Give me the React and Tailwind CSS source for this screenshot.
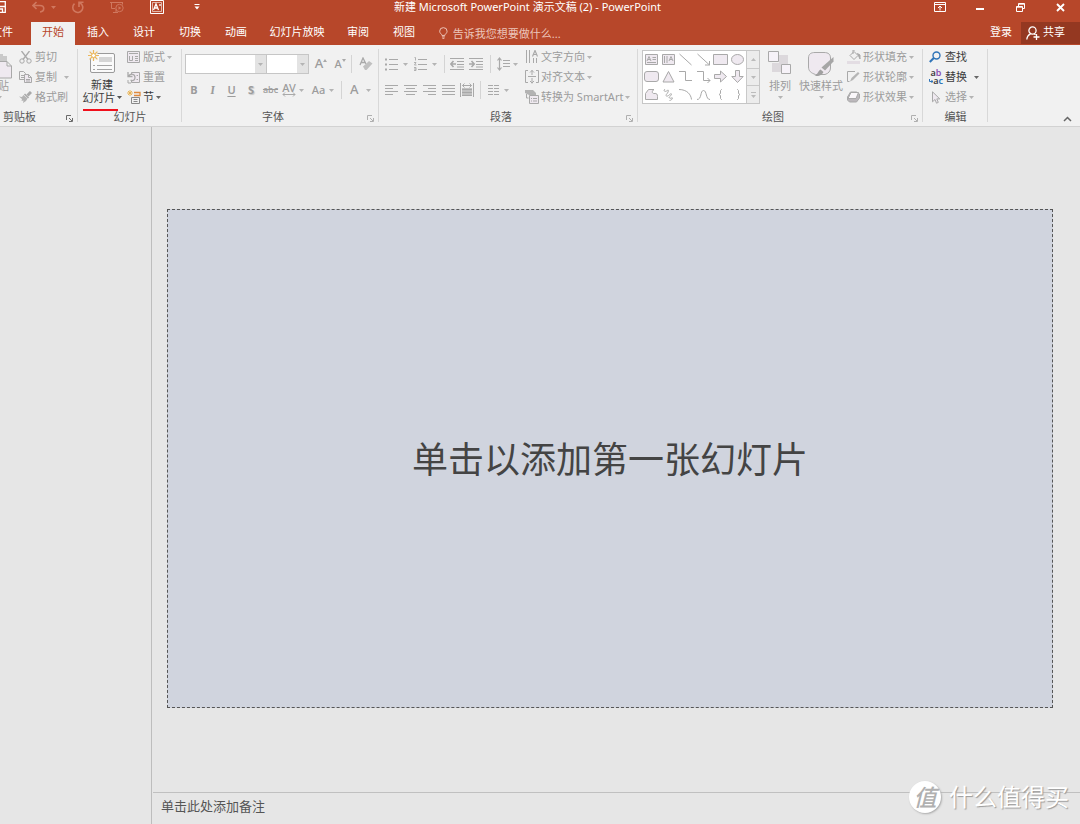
import React from "react";

const G = "#a9a9a9";
const F = "#efe9f0";

function Svg({ w, h, children, className = "" }) {
  return (
    <svg width={w} height={h} viewBox={`0 0 ${w} ${h}`} fill="none" stroke={G} strokeWidth="1" aria-hidden="true" className={`shrink-0 ${className}`}>
      {children}
    </svg>
  );
}

function Caret({ color = "#b4b4b4" }) {
  return (
    <svg width="5" height="3" viewBox="0 0 5 3" aria-hidden="true" className="shrink-0">
      <path d="M0 0h5L2.5 3z" fill={color} />
    </svg>
  );
}

function Rows({ rows, w = 13, h = 12 }) {
  return (
    <Svg w={w} h={h}>
      {rows.map(([a, b, y]) => (
        <path key={`${a}-${y}`} d={`M${a} ${y}.5H${b}`} />
      ))}
    </Svg>
  );
}

function Group({ label, className, launcher, children }) {
  return (
    <section aria-label={label} className={`relative flex shrink-0 flex-col ${className}`}>
      <div className="flex h-[60px]">{children}</div>
      <div className="flex h-[19px] items-center">
        <span className="flex-1 pt-[2px] text-center text-[#555]">{label}</span>
        {launcher && (
          <button aria-label={`${label}设置`} className="flex w-[15px] justify-center pt-1 pr-[2px]">
            <svg width="7" height="7" viewBox="0 0 7 7" fill="none" stroke="#b0b0b0" aria-hidden="true">
              <path d="M.5 5V.5H5M3 3l3 3M6.5 3v3.500H3" />
            </svg>
          </button>
        )}
      </div>
      <div className="absolute top-[2px] right-0 bottom-1 w-px bg-[#d8d8d8]" />
    </section>
  );
}

function Item({ icon, children, caret, on }) {
  return (
    <button className={`flex h-5 items-center gap-[2px] whitespace-nowrap ${on ? "text-[#3b3b3b]" : "text-[#9c9c9c]"}`}>
      <span className="flex w-[14px] shrink-0">{icon}</span>
      <span>{children}</span>
      {caret && <Caret color={on ? "#666" : "#b4b4b4"} />}
    </button>
  );
}

function Tool({ label, className, spread, children }) {
  return (
    <button aria-label={label} className={`flex h-5 shrink-0 items-center text-[#9c9c9c] ${spread ? "justify-between" : "justify-center"} ${className}`}>
      {children}
    </button>
  );
}

function Sep() {
  return <span className="h-[18px] w-px shrink-0 bg-[#d4d4d4]" />;
}

function TitleBar() {
  return (
    <div className="flex h-[22px] items-start text-white">
      <button aria-label="保存" className="flex h-[14px] w-[7px] items-center">
        <svg width="6" height="12" viewBox="0 0 6 12" fill="none" stroke="#fff" strokeWidth="1.300" aria-hidden="true">
          <path d="M0 .7h5.300v10.600H0M0 5.500h5M0 8h2.500v3" />
        </svg>
      </button>
      <button aria-label="撤消" className="ml-6 flex h-[14px] w-[15px] items-center justify-center">
        <svg width="13" height="12" viewBox="0 0 13 12" fill="none" stroke="#d0785f" strokeWidth="1.600" aria-hidden="true">
          <path d="M4.500 1L1 4.500 4.500 8M1.500 4.500H8c5 0 5 6 0 6.500" />
        </svg>
      </button>
      <button aria-label="撤消选项" className="ml-1 flex h-[14px] w-[7px] items-center justify-center">
        <Caret color="#d0785f" />
      </button>
      <button aria-label="恢复" className="ml-3 flex h-[14px] w-4 items-center justify-center">
        <svg width="13" height="13" viewBox="0 0 13 13" fill="none" stroke="#d0785f" strokeWidth="1.600" aria-hidden="true">
          <path d="M3.500 2.700A5 5 0 1 0 9 2M8 6V1.300h4.500" />
        </svg>
      </button>
      <button aria-label="从头开始放映" className="ml-6 flex h-[14px] w-4 items-center justify-center">
        <svg width="14" height="13" viewBox="0 0 14 13" fill="none" stroke="#d0785f" aria-hidden="true">
          <path d="M0 1.500h13M1.500 1.500v6H5M6 8v3.500M3 11.500h5M12.500 1.500v2" />
          <circle cx="9.500" cy="7" r="3.700" />
          <path d="M8.500 5.200v3.600L11.300 7z" fill="#d0785f" stroke="none" />
        </svg>
      </button>
      <button aria-label="文本框" className="ml-6 flex h-[14px] w-4 items-center justify-center">
        <svg width="14" height="14" viewBox="0 0 14 14" fill="none" stroke="#fff" aria-hidden="true">
          <path d="M.5.5h13v13H.5z" />
          <path d="M2.500 2.500h9v9h-9z" strokeOpacity=".6" />
          <path d="M3.500 10L6 4l2.500 6M4.500 8h3M10 4v2" strokeWidth="1.300" />
        </svg>
      </button>
      <button aria-label="自定义快速访问工具栏" className="ml-6 flex h-[14px] w-4 items-center justify-center">
        <svg width="6" height="6" viewBox="0 0 6 6" fill="#fff" aria-hidden="true">
          <path d="M.5 0h5v1h-5zM.5 2.500h5L3 5.500z" />
        </svg>
      </button>
      <h1 className="min-w-0 flex-1 truncate pr-[70px] text-center leading-[14px]">
        新建 Microsoft PowerPoint 演示文稿 (2) - PowerPoint
      </h1>
      <button aria-label="功能区显示选项" className="flex h-[14px] w-10 items-center justify-center">
        <svg width="12" height="10" viewBox="0 0 12 10" fill="none" stroke="#fff" aria-hidden="true">
          <path d="M.5.5h11v9H.5zM.5 2.500h11M6 8.500V4M4 6l2-2 2 2" />
        </svg>
      </button>
      <button aria-label="最小化" className="flex h-[14px] w-10 items-center justify-center pt-[3px]">
        <svg width="8" height="2" viewBox="0 0 8 2" aria-hidden="true">
          <path d="M0 0h8v2H0z" fill="#fff" />
        </svg>
      </button>
      <button aria-label="还原" className="flex h-[14px] w-10 items-center justify-center">
        <svg width="9" height="9" viewBox="0 0 9 9" fill="none" stroke="#fff" aria-hidden="true">
          <path d="M.5 3.500h6v5h-6zM.5 4.200h6M2.500 3V.5h6v5H7M2.500 1.200h6" />
        </svg>
      </button>
      <button aria-label="关闭" className="flex h-[14px] w-10 items-center justify-center">
        <svg width="9" height="9" viewBox="0 0 9 9" fill="none" stroke="#fff" strokeWidth="1.900" aria-hidden="true">
          <path d="M1 1l7 7M8 1L1 8" />
        </svg>
      </button>
    </div>
  );
}

function TabBar() {
  const tab = "h-[21px] shrink-0 whitespace-nowrap text-center";
  return (
    <nav className="flex h-[23px] items-start text-white">
      <button className="flex h-[21px] w-[31px] shrink-0 items-center justify-end overflow-hidden pr-[18px] whitespace-nowrap">文件</button>
      <button className="h-[23px] w-[44px] shrink-0 bg-[#f1f1f1] pb-[2px] text-center text-[#b7472a]">开始</button>
      <button className={`${tab} w-[46px]`}>插入</button>
      <button className={`${tab} w-[46px]`}>设计</button>
      <button className={`${tab} w-[46px]`}>切换</button>
      <button className={`${tab} w-[46px]`}>动画</button>
      <button className={`${tab} w-[76px]`}>幻灯片放映</button>
      <button className={`${tab} w-[46px]`}>审阅</button>
      <button className={`${tab} w-[46px]`}>视图</button>
      <label className="flex h-[22px] flex-1 items-center gap-[5px] pl-3">
        <svg width="9" height="12" viewBox="0 0 9 12" fill="none" stroke="#ecc5ba" aria-hidden="true">
          <path d="M3 8.500C3 7 .7 6.500.7 4.200a3.800 3.700 0 0 1 7.600 0C8.300 6.500 6 7 6 8.500zM3 10h3M3.500 11.500h2" />
        </svg>
        <input aria-label="告诉我您想要做什么" placeholder="告诉我您想要做什么..." className="h-[22px] w-full min-w-0 bg-transparent outline-none placeholder:text-[#ecc5ba]" />
      </label>
      <button className="h-[21px] w-10 shrink-0">登录</button>
      <button className="flex h-[22px] w-[59px] shrink-0 items-center gap-[3px] bg-[#943821] pb-px pl-[5px]">
        <svg width="14" height="14" viewBox="0 0 14 14" fill="none" stroke="#fff" strokeWidth="1.300" aria-hidden="true">
          <circle cx="6.500" cy="4.500" r="3.600" />
          <path d="M.8 13.500C1 10.500 2.500 8.800 4.500 7.800M8 7.700l1.500 1M10.500 8v6M7.500 11h6" />
        </svg>
        共享
      </button>
    </nav>
  );
}

function ClipboardGroup() {
  return (
    <section aria-label="剪贴板" className="relative flex w-[78px] shrink-0 flex-col">
      <div className="flex h-[60px]">
        <button className="flex w-[19px] shrink-0 flex-col items-start overflow-hidden pt-[5px] text-[#9c9c9c]">
          <Svg w={13} h={28}>
            <path d="M0 2h3v2h4v6H0z" fill="#c9c9c9" stroke="none" />
            <path d="M0 9.500h7l4.500 4.500v12H0M7 9.500V14h4.500" fill={F} />
          </Svg>
          <span className="flex w-[9px] justify-end leading-[12px] whitespace-nowrap">粘贴</span>
          <span className="mt-1 -ml-[3px] flex"><Caret /></span>
        </button>
        <div className="flex flex-col">
          <Item icon={<Svg w={13} h={13}><circle cx="3" cy="10" r="2.200" /><circle cx="10" cy="10" r="2.200" /><path d="M2.500 0l6.500 8.500M10.500 0L4 8.500" strokeWidth="1.300" /></Svg>}>剪切</Item>
          <div className="flex">
            <Item icon={<Svg w={13} h={12}><path d="M.5.5h4l2 2v6h-6zM2 4.500h3M2 6.500h3" /><path d="M5.500 3.500h4l3 3v5h-7zM9.500 3.500v3h3M7 8.500h4M7 10h4" fill={F} /></Svg>}>复制</Item>
            <button aria-label="复制选项" className="ml-[7px] flex items-center"><Caret /></button>
          </div>
          <Item icon={<Svg w={13} h={12}><path d="M0 5.500l3 .5 1.500-2 4 3.500L7 10l-3 2 .5-2.500L2.500 10 3 8z" fill="#b3b3b3" stroke="none" /><path d="M5.500 3l4 4" strokeWidth="1.600" /><path d="M8.500 4.500L12 1" strokeWidth="3" /></Svg>}>格式刷</Item>
        </div>
      </div>
      <div className="flex h-[19px] items-center justify-between">
        <span className="pt-[2px] pl-[3px] text-[#555]">剪贴板</span>
        <button aria-label="剪贴板设置" className="flex w-[15px] justify-center pt-1 pr-[2px]">
          <svg width="7" height="7" viewBox="0 0 7 7" fill="none" stroke="#6b6b6b" aria-hidden="true">
            <path d="M.5 5V.5H5M3 3l3 3M6.500 3v3.500H3" />
          </svg>
        </button>
      </div>
      <div className="absolute top-[2px] right-0 bottom-1 w-px bg-[#d8d8d8]" />
    </section>
  );
}

function SlidesGroup() {
  return (
    <Group label="幻灯片" className="w-[104px]">
      <button className="relative flex w-[48px] shrink-0 flex-col items-center pt-[3px] text-[#3b3b3b]">
        <svg width="28" height="24" viewBox="0 0 28 24" fill="none" aria-hidden="true">
          <rect x="2.500" y="3.500" width="24" height="19" rx="1.500" fill="#fafafa" stroke="#9a9a9a" />
          <path d="M11 7h13v5H11z" fill="#d5d5d5" />
          <path d="M5 15.500h2M9 15.500h15M5 19.500h2M9 19.500h15" stroke="#a5a5a5" />
          <circle cx="5.500" cy="5.500" r="3" fill="#f1f1f1" stroke="#f1f1f1" strokeWidth="3" />
          <path d="M5.500 0v11M0 5.500h11M1.600 1.600l7.800 7.800M9.400 1.600L1.600 9.400" stroke="#ebb75c" strokeWidth="1.200" />
          <circle cx="5.500" cy="5.500" r="2" fill="#fff" stroke="#ebb75c" />
        </svg>
        <span className="mt-1 leading-[13px]">新建</span>
        <span className="flex items-center gap-[1px] leading-[13px] whitespace-nowrap">幻灯片 <Caret color="#555" /></span>
        <span className="absolute top-[62px] left-[5px] h-[2px] w-[35px] bg-[#f0101c]" />
      </button>
      <div className="flex flex-col pl-[1px]">
        <Item caret icon={<Svg w={13} h={12}><path d="M.5.5h12v11H.5z" fill={F} /><path d="M2 2.500h9M2.500 5v4.500h3V5M8 5.500h3M8 7.500h3M8 9.500h3" /></Svg>}>版式</Item>
        <Item icon={<Svg w={13} h={13}><path d="M4.500 3.500V1.500h8v10h-8v-2" fill={F} /><path d="M1 1v4.500h4.500M1.500 5C4 2 8 3 8 6.500S5 10 3.500 9" strokeWidth="1.300" /><path d="M9.500 4.500H11M9.500 8.500H11M1 9v3h3" /></Svg>}>重置</Item>
        <Item on caret icon={<svg width="14" height="14" viewBox="0 0 14 14" fill="none" className="shrink-0" aria-hidden="true"><path d="M3 0v6M0 3h6M1 1l4 4M5 1L1 5" stroke="#e9b04a" strokeWidth=".9" /><path d="M7 2.500h6v3H7" stroke="#e08a3c" strokeWidth="1.300" /><path d="M4.500 7.500h8v6h-8zM6.500 9.500h4M6.500 11.500h4" stroke="#888" /></svg>}>节</Item>
      </div>
    </Group>
  );
}

function Combo({ label, className }) {
  return (
    <div className={`flex h-5 shrink-0 border border-[#c6c6c6] bg-white ${className}`}>
      <input aria-label={label} className="min-w-0 flex-1 bg-transparent px-1 outline-none" />
      <button aria-label={`${label}列表`} className="flex w-[11px] shrink-0 items-center justify-center bg-[#e3e3e3]"><Caret /></button>
    </div>
  );
}

function FontGroup() {
  return (
    <Group label="字体" launcher className="w-[197px]">
      <div className="flex flex-col gap-[6px] pt-[7px] pl-[3px]">
        <div className="flex items-center">
          <Combo label="字体名称" className="w-[82px]" />
          <Combo label="字号" className="-ml-px w-[43px]" />
          <Tool label="增大字号" className="ml-[2px] w-5"><span className="text-[13px] font-medium">A</span><span className="-mt-[8px]"><Svg w={4} h={3}><path d="M0 3h4L2 0z" fill={G} stroke="none" /></Svg></span></Tool>
          <Tool label="减小字号" className="w-[18px]"><span className="text-[11px] font-medium">A</span><span className="-mt-[8px]"><Svg w={4} h={3}><path d="M0 0h4L2 3z" fill={G} stroke="none" /></Svg></span></Tool>
          <span className="ml-[2px] flex"><Sep /></span>
          <Tool label="清除格式" className="ml-[6px] w-4">
            <Svg w={14} h={14}><path d="M1 8L4 1l3 6M2 5.500h4" strokeWidth="1.300" /><path d="M4 9.500l6-5.500 3.500 2.500-6 6.500H6z" fill="#c0c0c0" stroke="none" /></Svg>
          </Tool>
        </div>
        <div className="flex items-center">
          <Tool label="加粗" className="w-[18px] font-bold">B</Tool>
          <Tool label="倾斜" className="w-[19px] font-serif text-[12px] font-bold italic">I</Tool>
          <Tool label="下划线" className="w-[19px] font-semibold underline underline-offset-2">U</Tool>
          <Tool label="文字阴影" className="w-5 font-bold"><span className="text-shadow-[1px_1px_1px_#c5c5c5]">S</span></Tool>
          <Tool label="删除线" className="w-[19px] text-[9px] font-medium line-through">abc</Tool>
          <Tool label="字符间距" className="w-[26px] gap-[3px]">
            <span className="flex flex-col items-center">
              <span className="text-[11px] leading-[9px] font-medium">AV</span>
              <Svg w={14} h={5}><path d="M1 2.500h12M3 .5l-2 2 2 2M11 .5l2 2-2 2" /></Svg>
            </span>
            <Caret />
          </Tool>
          <Tool label="更改大小写" className="ml-1 w-[26px] gap-1"><span className="font-medium">Aa</span><Caret /></Tool>
          <span className="ml-[5px] flex"><Sep /></span>
          <Tool spread label="字体颜色" className="ml-2 w-[21px]"><span className="text-[13px] font-medium">A</span><Caret /></Tool>
        </div>
      </div>
    </Group>
  );
}

function ParagraphGroup() {
  return (
    <Group label="段落" launcher className="w-[259px]">
      <div className="flex w-[146px] shrink-0 flex-col gap-[6px] pt-[7px] pl-[6px]">
        <div className="flex items-center">
          <Tool spread label="项目符号" className="w-[23px]">
            <Svg w={13} h={13}><path d="M0 1.500h2M0 6.500h2M0 11.500h2" strokeWidth="2" /><path d="M4 1.500h9M4 6.500h9M4 11.500h9" /></Svg><Caret />
          </Tool>
          <Tool spread label="编号" className="ml-[6px] w-[23px]">
            <Svg w={13} h={14}><path d="M.5.500h1v3M0 5.500h2L.5 8h2M0 10.500h2v3H0M0 12h2" strokeWidth=".9" /><path d="M4 2.500h9M4 7.500h9M4 12.500h9" /></Svg><Caret />
          </Tool>
          <span className="ml-[7px] flex"><Sep /></span>
          <Tool label="减少缩进" className="ml-[5px] w-[15px]">
            <Svg w={15} h={12}><path d="M0 .5h14M7 3.500h7M7 6.500h7M0 11.500h14M7 9h7" /><path d="M1 6h5M3.500 3L.8 6l2.700 3" strokeWidth="1.600" /></Svg>
          </Tool>
          <Tool label="增加缩进" className="ml-1 w-[15px]">
            <Svg w={15} h={12}><path d="M0 .5h14M7 3.500h7M7 6.500h7M0 11.500h14M7 9h7" /><path d="M0 6h5M2.500 3l2.700 3-2.700 3" strokeWidth="1.600" /></Svg>
          </Tool>
          <span className="ml-[6px] flex"><Sep /></span>
          <Tool spread label="行距" className="ml-[6px] w-[21px]">
            <Svg w={13} h={14}><path d="M2.500 1v12M.5 3.500l2-2.500 2 2.500M.5 10.500l2 2.500 2-2.500" strokeWidth="1.200" /><path d="M6 3.500h7M6 6.500h7M6 9.500h7" /></Svg><Caret />
          </Tool>
        </div>
        <div className="flex items-center">
          <Tool label="左对齐" className="w-[13px]"><Rows rows={[[0, 13, 0], [0, 8, 3], [0, 13, 6], [0, 8, 9]]} h={10} /></Tool>
          <Tool label="居中" className="ml-[6px] w-[13px]"><Rows rows={[[0, 13, 0], [2, 11, 3], [0, 13, 6], [2, 11, 9]]} h={10} /></Tool>
          <Tool label="右对齐" className="ml-[6px] w-[13px]"><Rows rows={[[0, 13, 0], [5, 13, 3], [0, 13, 6], [5, 13, 9]]} h={10} /></Tool>
          <Tool label="两端对齐" className="ml-[6px] w-[13px]"><Rows rows={[[0, 13, 0], [0, 13, 3], [0, 13, 6], [0, 13, 9]]} h={10} /></Tool>
          <Tool label="分散对齐" className="ml-[5px] w-[14px]">
            <Svg w={14} h={14}><path d="M.5 0v14M13.500 0v14M2.500 2.500h9M4.500.5l-2 2 2 2M9.500.5l2 2-2 2" /><path d="M2 5h10v8H2z" fill="#c2c2c2" stroke="none" /><path d="M2 6.500h10M2 9.500h10M2 12.500h10" /></Svg>
          </Tool>
          <span className="ml-[6px] flex"><Sep /></span>
          <Tool spread label="分栏" className="ml-[7px] w-[21px]">
            <Svg w={11} h={10}><path d="M0 .5h5M6 .5h5M0 3.500h5M6 3.500h5M0 6.500h5M6 6.500h5M0 9.500h5M6 9.500h5" /></Svg><Caret />
          </Tool>
        </div>
      </div>
      <div className="flex flex-col">
        <Item caret icon={<Svg w={13} h={14}><path d="M1.500 0v13M4.500 0v13M8.500 8v5M11.500 8v5" /><path d="M7.500 6.500L10 .5l2.500 6M8.300 4.500h3.400" strokeWidth="1.200" /></Svg>}>文字方向</Item>
        <Item caret icon={<Svg w={14} h={14}><path d="M3 .5H.5v12H3M11 .5h2.500v12H11" /><path d="M3 6.500h8M7 0v5M5 2.500l2-2 2 2M7 8v5.500M5 11l2 2 2-2" /></Svg>}>对齐文本</Item>
        <Item caret icon={<Svg w={14} h={14}><path d="M0 0h8l3 3v2H4L0 3z" fill="#b3b3b3" stroke="none" /><path d="M1.500 4v4h2" /><path d="M4.500 5.500h9v8h-9z" fill={F} /><path d="M6 8.500h1M8 8.500h4M6 11h1M8 11h4" /></Svg>}>转换为 SmartArt</Item>
      </div>
    </Group>
  );
}

const shapes = [
  ["文本框", <><path d="M.5 1.500h12v10H.5z" fill={F} /><path d="M2 8l2-4.500L6 8M3 6.500h2M7.500 4.500H11M7.500 6.500H11M2 9.500h9" /></>],
  ["竖排文本框", <><path d="M.5 1.500h12v10H.5z" fill={F} /><path d="M7 8l2-4.500L11 8M8 6.500h2M2.500 3v7M5 3v7" /></>],
  ["直线", <path d="M.5 1l12 11" />],
  ["箭头", <path d="M.5 1l12 11M12.500 8v4H8" />],
  ["矩形", <path d="M-.5 1.500h14v10h-14z" fill={F} />],
  ["椭圆", <ellipse cx="6.500" cy="6.500" rx="6" ry="5" fill={F} />],
  ["圆角矩形", <rect x="-.5" y="1.500" width="14" height="10" rx="2.500" fill={F} />],
  ["三角形", <path d="M6.500 1.500l5.500 10.500H1z" fill={F} />],
  ["肘形连接符", <path d="M0 1.500h6.500v9H13" />],
  ["肘形箭头", <path d="M0 1.500h6.500v9H13M10.500 8l2.500 2.500-2.500 2.500" />],
  ["右箭头", <path d="M.5 4.500h6v-3.500l6 5.500-6 5.500V8.500h-6z" fill={F} />],
  ["下箭头", <path d="M4.500.5v6H.8l5.700 6 5.700-6H8.500v-6z" fill={F} />],
  ["任意多边形", <path d="M.5 11.500V5.500l3-4H9c-2.500 1.500-2 4 0 4 3-.5 3.500 1 3.500 3v3z" fill={F} />],
  ["自由曲线", <path d="M3 1c-2 2 0 3 1.500 2S7 1.500 6 4s-3 3-1.500 4S9 4.500 9.500 6 6 9 7.500 10s3-1 3 0-1.500 2.500-3 2.500" />],
  ["弧形", <path d="M0 1.500c8 0 12 5 12.500 10" />],
  ["曲线", <path d="M0 11.500c5 0 3-9 6.500-9s2 9 6.500 9" />],
  ["左大括号", <path d="M8 1.500H7.500L6.500 2.500v3L5 6.500l1.500 1v3l1 1H8" />],
  ["右大括号", <path d="M6 1.500h.5l1 1v3L9 6.500l-1.500 1v3l-1 1H6" />],
];

function DrawingGroup() {
  const more = "flex flex-1 items-center justify-center border-b border-[#c9c9c9] last:border-b-0";
  return (
    <Group label="绘图" launcher className="w-[285px]">
      <div className="mt-[3px] ml-[4px] flex h-[54px] w-[118px] shrink-0 border border-[#c6c6c6] bg-white">
        <div className="grid flex-1 grid-cols-6 grid-rows-3">
          {shapes.map(([name, art]) => (
            <button key={name} aria-label={name} className="flex items-center justify-center">
              <Svg w={13} h={13} className="overflow-visible">{art}</Svg>
            </button>
          ))}
        </div>
        <div className="flex w-[13px] flex-col border-l border-[#c9c9c9] bg-[#ececec]">
          <button aria-label="上一行" className={more}><svg width="5" height="3" viewBox="0 0 5 3" aria-hidden="true"><path d="M0 3h5L2.500 0z" fill="#bbb" /></svg></button>
          <button aria-label="下一行" className={more}><Caret color="#bbb" /></button>
          <button aria-label="其他形状" className={more}><svg width="5" height="6" viewBox="0 0 5 6" aria-hidden="true"><path d="M0 0h5v1H0zM0 3h5L2.500 6z" fill="#bbb" /></svg></button>
        </div>
      </div>
      <button className="ml-[6px] flex w-[28px] shrink-0 flex-col items-center pt-[4px] text-[#9c9c9c]">
        <Svg w={24} h={25}>
          <path d="M11 4h9v9h-9zM4 12h9v9H4z" fill="#dcd8dc" stroke="none" />
          <path d="M.5.5h10v10H.5zM13.500 13.500h9v9h-9z" fill="#f6f2f8" />
        </Svg>
        <span className="mt-1 leading-[12px]">排列</span>
        <span className="mt-1 flex"><Caret /></span>
      </button>
      <button className="ml-[4px] flex w-[46px] shrink-0 flex-col items-center pt-[4px] text-[#9c9c9c]">
        <Svg w={26} h={25}>
          <path d="M10 23.500H7.500C3 22 .5 20 .5 16V7C.5 3 3 1.500 7 1.500h9c4.500 0 6.500 2 6.500 5.500v10c0 3-2 5.500-5.500 6.500z" fill={F} />
          <path d="M25.500 6v4.500L17 19.500l-3.500-3z" fill="#a6a6a6" stroke="none" />
          <path d="M6.500 25c3-1 3-4.500 6-6.500l3 2.500c-1.500 3.500-5 4.500-9 4z" fill="#a0a0a0" stroke="none" />
        </Svg>
        <span className="mt-1 leading-[12px] whitespace-nowrap">快速样式</span>
        <span className="mt-1 flex"><Caret /></span>
      </button>
      <div className="flex flex-col pl-[3px]">
        <Item caret icon={<Svg w={14} h={14}><path d="M0 11h13v3H0z" fill="#e3dde3" stroke="none" /><path d="M3 5.500L7 1.500l4 4-4 4zM6 4V0h2" /><path d="M10.500 3.500l2.500 1.500v4z" fill={G} /></Svg>}>形状填充</Item>
        <Item caret icon={<Svg w={13} h={12}><path d="M8 .5H.5v10h2" /><path d="M3 10.500L4.500 7 11 1l1.500 1.500L6 9z" fill="#b5b5b5" stroke="none" /></Svg>}>形状轮廓</Item>
        <Item caret icon={<Svg w={13} h={12}><path d="M3.500 1h6l3 2v4l-3 4h-7L.5 9V6z" fill="#bcb8bc" /><path d="M4 1.500h7.500L9 7.500H1z" fill="#faf7fa" /></Svg>}>形状效果</Item>
      </div>
    </Group>
  );
}

function EditingGroup() {
  return (
    <Group label="编辑" className="w-[65px]">
      <div className="flex flex-col pl-[6px]">
        <Item on icon={<Svg w={12} h={12}><circle cx="7.500" cy="4.500" r="3.500" stroke="#2f74b8" strokeWidth="1.400" /><path d="M4.800 7L.8 11" stroke="#2f74b8" strokeWidth="2" /></Svg>}>查找</Item>
        <div className="flex">
          <Item on icon={
            <span className="flex w-[14px] flex-col text-[9px] leading-[8px] font-semibold">
              <span>a<span className="text-[#8a4fb0]">b</span></span>
              <span className="flex items-center justify-end">
                <svg width="4" height="5" viewBox="0 0 4 5" fill="none" stroke="#2f74b8" className="shrink-0" aria-hidden="true"><path d="M.5 0v2.500H4M2.500 1l1.300 1.500L2.500 4" /></svg>
                a<span className="text-[#2f74b8]">c</span>
              </span>
            </span>
          }>替换</Item>
          <button aria-label="替换选项" className="ml-[7px] flex items-center"><Caret color="#666" /></button>
        </div>
        <Item caret icon={<Svg w={13} h={13}><path d="M3.500.8v10L6 8.500l1.500 3.700 1.800-.8-1.500-3.500h3z" fill={F} /></Svg>}>选择</Item>
      </div>
    </Group>
  );
}

export default function App() {
  return (
    <div className="relative flex min-h-screen flex-col overflow-hidden bg-[#e6e6e6] font-['Noto_Sans','Noto_Sans_CJK_SC',sans-serif] text-[11px] text-[#444]">
      <header className="bg-[#b7472a]">
        <TitleBar />
        <TabBar />
      </header>
      <div className="flex border-b border-[#d2d2d2] bg-[#f1f1f1] pt-[2px]">
        <ClipboardGroup />
        <SlidesGroup />
        <FontGroup />
        <ParagraphGroup />
        <DrawingGroup />
        <EditingGroup />
        <div className="flex flex-1 items-end justify-end pr-2 pb-1">
          <button aria-label="折叠功能区">
            <svg width="9" height="6" viewBox="0 0 9 6" fill="none" stroke="#666" strokeWidth="1.500" aria-hidden="true">
              <path d="M1 5l3.500-3.500L8 5" />
            </svg>
          </button>
        </div>
      </div>
      <div className="flex flex-1">
        <aside aria-label="幻灯片缩略图" className="w-[152px] shrink-0 border-r border-[#bdbdbd]" />
        <main className="flex min-w-0 flex-1 flex-col pl-px">
          <div className="flex flex-1 items-center pr-[27px] pb-[2px] pl-[14px]">
            <button className="flex aspect-[16/9] w-full items-center justify-center border border-dashed border-[#555] bg-[#d0d4de] pt-[2px] text-[36px] text-[#444]">
              单击以添加第一张幻灯片
            </button>
          </div>
          <textarea aria-label="备注" placeholder="单击此处添加备注" rows={1} className="block h-8 resize-none border-t border-[#c0c0c0] bg-transparent px-2 py-[3px] text-[13px] leading-[20px] outline-none placeholder:text-[#555]" />
        </main>
      </div>
      <div className="pointer-events-none absolute right-[11px] bottom-[11px] flex items-center gap-2 text-white">
        <span className="flex size-8 items-center justify-center rounded-full bg-white text-[23px] leading-none font-medium text-[#b0b0b0] italic shadow-[1px_1px_2px_#aaa]">值</span>
        <span className="text-[24px] leading-8 text-shadow-[1px_1px_1px_#999]">什么值得买</span>
      </div>
    </div>
  );
}
